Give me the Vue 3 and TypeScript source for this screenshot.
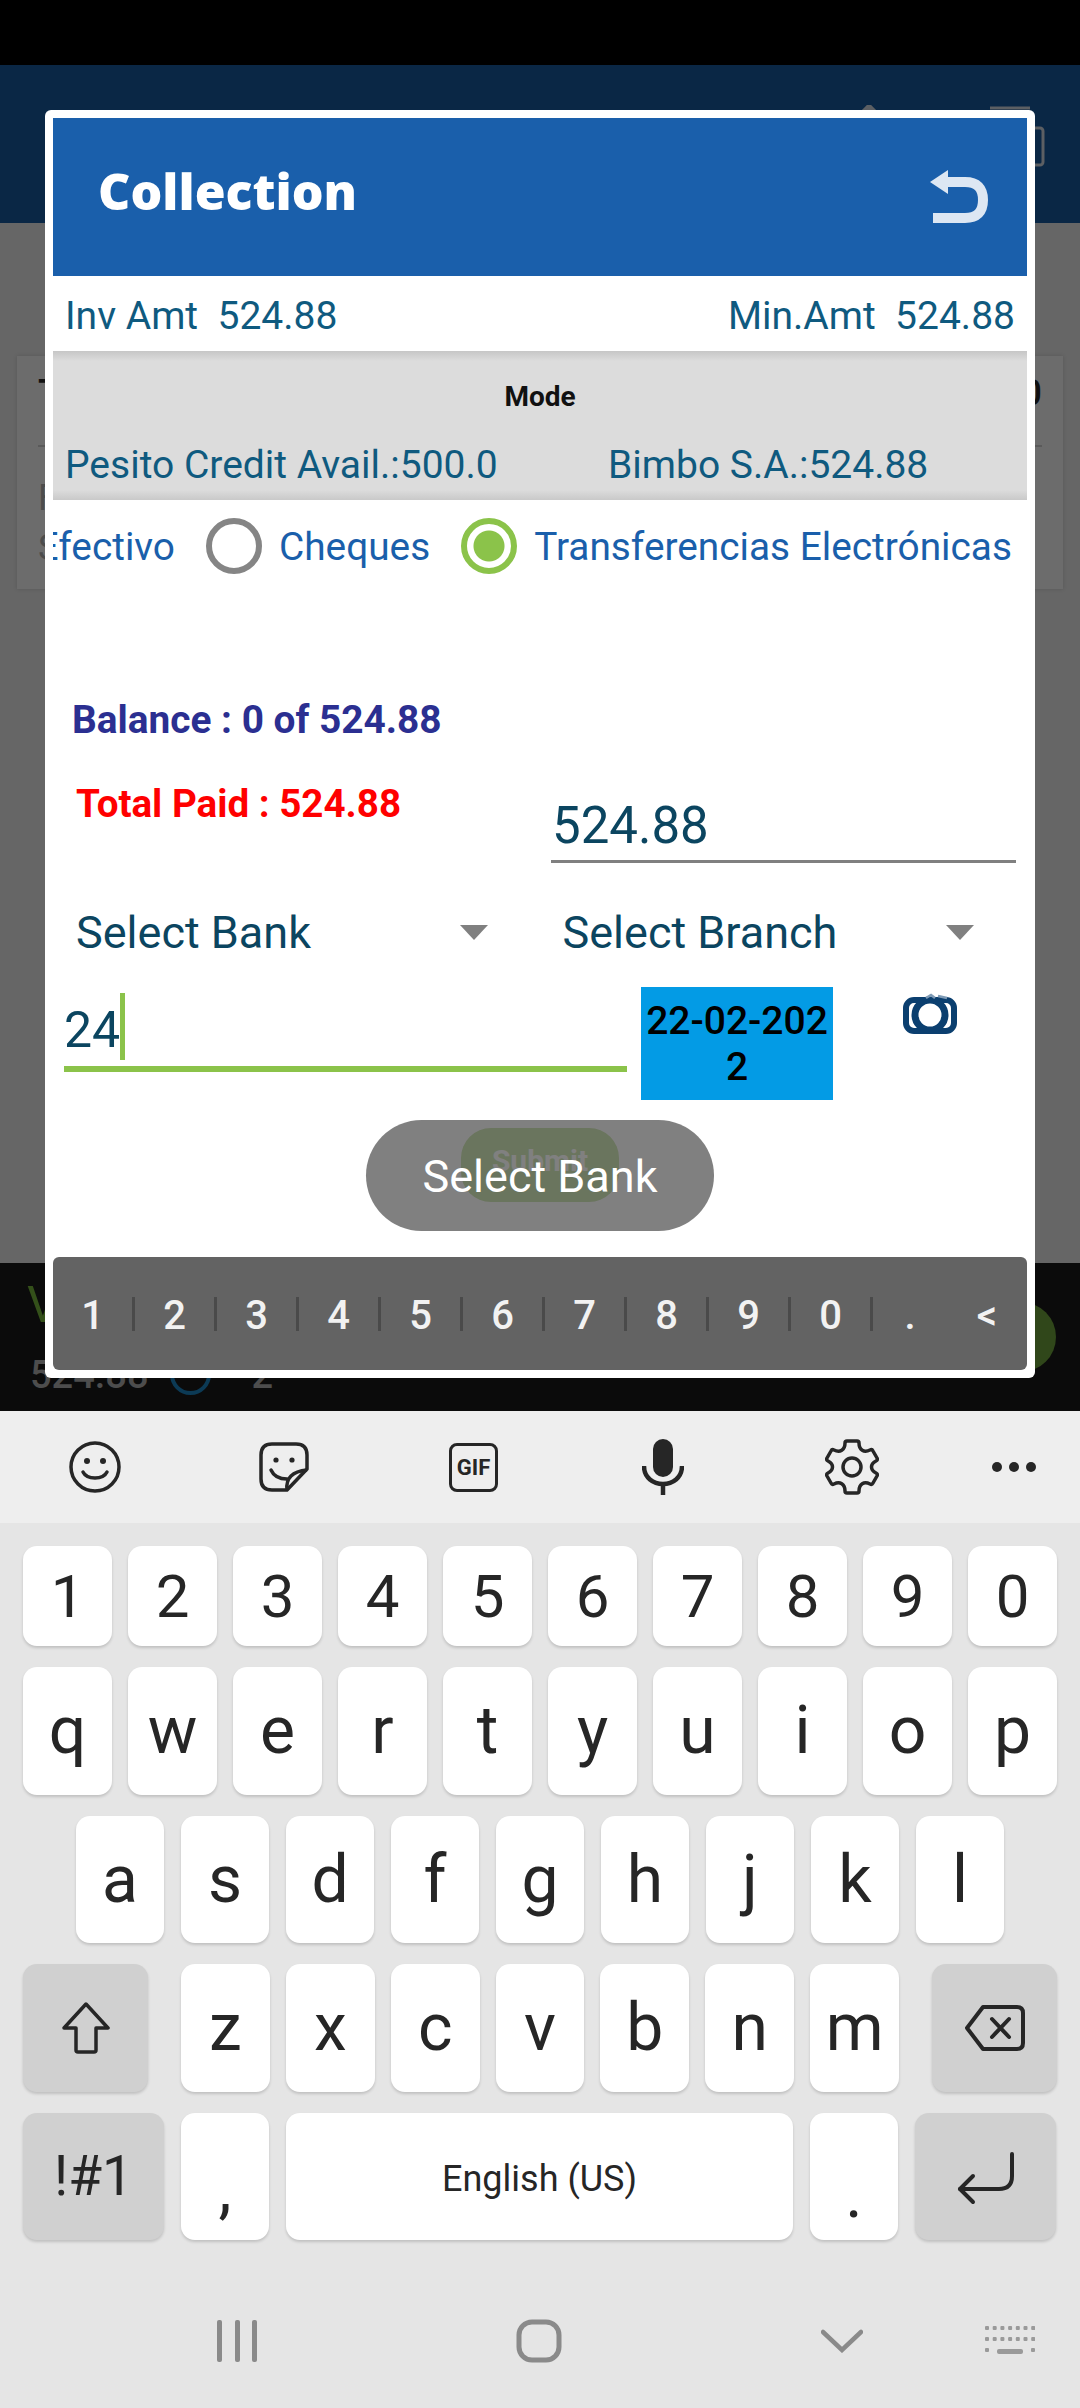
<script setup lang="ts">
const numberRow = ['1', '2', '3', '4', '5', '6', '7', '8', '9', '0'];
const topRow = ['q', 'w', 'e', 'r', 't', 'y', 'u', 'i', 'o', 'p'];
const homeRow = ['a', 's', 'd', 'f', 'g', 'h', 'j', 'k', 'l'];
const bottomRow = ['z', 'x', 'c', 'v', 'b', 'n', 'm'];
const keypad = ['1', '2', '3', '4', '5', '6', '7', '8', '9', '0', '.', '<'];
</script>

<template>
  <div class="page">
    <div class="status"></div>

    <div class="bg-header">
      <svg width="190" height="70" viewBox="0 0 190 70" fill="none" stroke="#5c5f63" stroke-width="3">
        <path d="M3 6 L9 0 L15 6" fill="#5c5f63" />
        <path d="M130 3 H170" />
        <rect x="120" y="23" width="63" height="37" rx="3" />
      </svg>
    </div>
    <div class="bg-body">
      <div class="bg-card">
        <div class="bg-card-top"><span>T</span><span>0</span></div>
        <div class="bg-card-line"></div>
        <div class="bg-card-text">F</div>
        <div class="bg-card-text">S</div>
      </div>
    </div>
    <div class="bg-bar">
      <div class="bg-bar-left">
        <div class="bg-v">V</div>
        <div class="bg-sum">
          <span>524.88</span>
          <span class="bg-info"></span>
          <span>2</span>
        </div>
      </div>
      <div class="bg-fab"></div>
    </div>

    <div class="keyboard">
      <div class="toolbar">
        <div class="tool">
          <svg width="52" height="52" viewBox="0 0 52 52" fill="none" stroke="#262626" stroke-width="3.5">
            <circle cx="26" cy="26" r="24" />
            <circle cx="18" cy="20" r="3" fill="#262626" stroke="none" />
            <circle cx="34" cy="20" r="3" fill="#262626" stroke="none" />
            <path d="M14 31 C18 39 34 39 38 31" stroke-linecap="round" />
          </svg>
        </div>
        <div class="tool">
          <svg width="52" height="52" viewBox="0 0 52 52" fill="none" stroke="#262626" stroke-width="3.5" stroke-linejoin="round">
            <path d="M14 3 H38 Q49 3 49 14 V28 L29 49 H14 Q3 49 3 38 V14 Q3 3 14 3 Z" />
            <path d="M29 49 Q27 31 49 29" />
            <path d="M29 38 Q17 38 13 29" stroke-linecap="round" />
            <circle cx="18" cy="19" r="2.6" fill="#262626" stroke="none" />
            <circle cx="34" cy="19" r="2.6" fill="#262626" stroke="none" />
          </svg>
        </div>
        <div class="tool">
          <div class="gif">GIF</div>
        </div>
        <div class="tool">
          <svg width="42" height="58" viewBox="0 0 42 58" fill="none" stroke="#262626" stroke-width="4.5">
            <rect x="11" y="1" width="20" height="38" rx="10" fill="#262626" stroke="none" />
            <path d="M2 28 C2 52 40 52 40 28" />
            <path d="M21 44 V57" />
          </svg>
        </div>
        <div class="tool">
          <svg width="54" height="56" viewBox="-27 -28 54 56" fill="none" stroke="#262626" stroke-width="3.5" stroke-linejoin="round">
            <path d="M-7 -24 Q-7 -26 -5 -26 H5 Q7 -26 7 -24 C7 -17 12 -14 18 -17 Q20 -18 21 -16 L25 -9 Q26 -7 24 -6 C18 -3 18 3 24 6 Q26 7 25 9 L21 16 Q20 18 18 17 C12 14 7 17 7 24 Q7 26 5 26 H-5 Q-7 26 -7 24 C-7 17 -12 14 -18 17 Q-20 18 -21 16 L-25 9 Q-26 7 -24 6 C-18 3 -18 -3 -24 -6 Q-26 -7 -25 -9 L-21 -16 Q-20 -18 -18 -17 C-12 -14 -7 -17 -7 -24 Z" />
            <circle r="9" />
          </svg>
        </div>
        <div class="tool tool-last">
          <span class="dot"></span><span class="dot"></span><span class="dot"></span>
        </div>
      </div>

      <div class="keys">
        <div class="row row-num">
          <div v-for="k in numberRow" :key="k" class="key">{{ k }}</div>
        </div>
        <div class="row">
          <div v-for="k in topRow" :key="k" class="key">{{ k }}</div>
        </div>
        <div class="row row-home">
          <div v-for="k in homeRow" :key="k" class="key">{{ k }}</div>
        </div>
        <div class="row row-shift">
          <div class="key key-fn key-shift">
            <svg width="50" height="54" viewBox="0 0 50 54" fill="none" stroke="#262626" stroke-width="3.5" stroke-linejoin="round">
              <path d="M25 3 L47 27 H35 V49 Q35 51 33 51 H17 Q15 51 15 49 V27 H3 Z" />
            </svg>
          </div>
          <div class="letters">
            <div v-for="k in bottomRow" :key="k" class="key">{{ k }}</div>
          </div>
          <div class="key key-fn key-back">
            <svg width="62" height="48" viewBox="0 0 60 48" fill="none" stroke="#262626" stroke-width="4" stroke-linejoin="round" stroke-linecap="round">
              <path d="M18 3 H52 Q58 3 58 9 V39 Q58 45 52 45 H18 L2 24 Z" />
              <path d="M27 15 L44 33 M44 15 L27 33" />
            </svg>
          </div>
        </div>
        <div class="row row-bottom">
          <div class="key key-fn key-sym">!#1</div>
          <div class="key key-comma">,</div>
          <div class="key key-space">English (US)</div>
          <div class="key key-dot">.</div>
          <div class="key key-fn key-enter">
            <svg width="58" height="54" viewBox="0 0 58 54" fill="none" stroke="#262626" stroke-width="4" stroke-linecap="round" stroke-linejoin="round">
              <path d="M55 2 V24 Q55 37 42 37 H3" />
              <path d="M16 24 L3 37 L16 50" />
            </svg>
          </div>
        </div>
      </div>

      <div class="nav">
        <svg class="nav-recent" width="40" height="42" viewBox="0 0 40 42" fill="#8a8a8a">
          <rect x="0" y="0" width="5" height="42" rx="2" />
          <rect x="18" y="0" width="5" height="42" rx="2" />
          <rect x="35" y="0" width="5" height="42" rx="2" />
        </svg>
        <svg class="nav-home" width="46" height="44" viewBox="0 0 46 44" fill="none" stroke="#8a8a8a" stroke-width="5">
          <rect x="3" y="3" width="40" height="38" rx="13" />
        </svg>
        <svg class="nav-back" width="42" height="24" viewBox="0 0 42 24" fill="none" stroke="#8a8a8a" stroke-width="4.5" stroke-linecap="round">
          <path d="M2 3 L21 21 L40 3" />
        </svg>
        <svg class="nav-kbd" width="50" height="30" viewBox="0 0 50 30" fill="#9a9a9a">
          <rect v-for="i in 7" :key="'a' + i" :x="(i - 1) * 7.7" y="0" width="4" height="4" rx="1" />
          <rect v-for="i in 7" :key="'b' + i" :x="(i - 1) * 7.7" y="11" width="4" height="4" rx="1" />
          <rect x="0" y="22" width="4" height="4" rx="1" />
          <rect x="46" y="22" width="4" height="4" rx="1" />
          <rect x="12" y="23" width="26" height="5" rx="2" />
        </svg>
      </div>
    </div>

    <div class="dialog">
      <div class="dlg-head">
        <span class="dlg-title">Collection</span>
        <svg width="60" height="54" viewBox="0 0 60 54" fill="none" stroke="#dde7f3" stroke-width="10">
          <path d="M15 12 H35 Q53 12 53 30 Q53 48 35 48 H3" />
          <path d="M0 12 L18 0 V24 Z" fill="#dde7f3" stroke="none" />
        </svg>
      </div>

      <div class="amounts">
        <span>Inv Amt &nbsp;524.88</span>
        <span>Min.Amt &nbsp;524.88</span>
      </div>

      <div class="mode">
        <div class="mode-title">Mode</div>
        <div class="mode-lines">
          <span class="mode-credit">Pesito Credit Avail.:500.0</span>
          <span>Bimbo S.A.:524.88</span>
        </div>
      </div>

      <div class="radios">
        <span class="radio-label">Efectivo</span>
        <span class="radio"></span>
        <span class="radio-label">Cheques</span>
        <span class="radio radio-on"></span>
        <span class="radio-label">Transferencias Electrónicas</span>
      </div>

      <div class="balance">Balance : 0 of 524.88</div>

      <div class="paid">
        <div class="paid-text">Total Paid : 524.88</div>
        <div class="paid-input">524.88</div>
      </div>

      <div class="selects">
        <div class="select"><span>Select Bank</span><i class="caret"></i></div>
        <div class="select"><span>Select Branch</span><i class="caret"></i></div>
      </div>

      <div class="cheque">
        <div class="cheque-input">24<i class="cursor"></i></div>
        <div class="date">22-02-2022</div>
        <svg class="camera" width="56" height="40" viewBox="0 0 56 40" fill="none" stroke="#0b3f6f" stroke-width="6">
          <rect x="4" y="5" width="48" height="31" rx="8" />
          <circle cx="28" cy="20" r="15" fill="#fff" stroke-width="7" />
          <path d="M24 3 L29 0 L33 3 M36 1 L45 3" stroke="#7f9bb6" stroke-width="2.5" />
        </svg>
      </div>

      <div class="submit">Submit</div>

      <div class="keypad">
        <template v-for="(k, i) in keypad" :key="k">
          <span class="pad-key">{{ k }}</span>
          <i v-if="i < 10" class="pad-sep"></i>
        </template>
      </div>

      <div class="toast">Select Bank</div>
    </div>
  </div>
</template>

<style scoped>
.page {
  position: relative;
  width: 1080px;
  height: 2408px;
  display: flex;
  flex-direction: column;
  overflow: hidden;
  font-family: Roboto, "Noto Sans", sans-serif;
  background: #e5e5e5;
}

.status {
  height: 65px;
  background: #000;
}

.bg-header {
  height: 158px;
  box-sizing: border-box;
  background: #0a2745;
  display: flex;
  justify-content: flex-end;
  padding: 40px 30px 0 0;
}

.bg-body {
  height: 1040px;
  background: #666;
  padding: 133px 17px 0;
  box-sizing: border-box;
}

.bg-card {
  height: 233px;
  box-sizing: border-box;
  background: #6c6c6c;
  box-shadow: 0 0 4px rgba(0, 0, 0, 0.15);
  padding: 16px 21px;
  color: #3a3a3a;
  font-size: 36px;
}

.bg-card-top {
  display: flex;
  justify-content: space-between;
  font-weight: 500;
  color: #111;
}

.bg-card-line {
  height: 2px;
  margin: 31px 0 26px;
  background: #5a5a5a;
}

.bg-card-text {
  height: 50px;
  line-height: 50px;
  color: #4c4c4c;
}

.bg-bar {
  height: 148px;
  background: #0b0b0b;
  display: flex;
  justify-content: space-between;
  padding: 0 24px 0 27px;
}

.bg-v {
  height: 50px;
  margin-top: 17px;
  line-height: 50px;
  font-size: 50px;
  color: #34501a;
}

.bg-sum {
  display: flex;
  align-items: center;
  gap: 21px;
  height: 41px;
  margin-top: 24px;
  padding-left: 3px;
  font-size: 38px;
  font-weight: 500;
  color: #4d4d4d;
}

.bg-info {
  width: 41px;
  height: 41px;
  box-sizing: border-box;
  border: 4px solid #0c3a55;
  border-radius: 50%;
  margin-right: 20px;
}

.bg-fab {
  width: 70px;
  height: 70px;
  margin-top: 39px;
  border-radius: 50%;
  background: #30471a;
}

.keyboard {
  height: 997px;
  display: flex;
  flex-direction: column;
  background: #e5e5e5;
}

.toolbar {
  height: 112px;
  flex: none;
  display: flex;
  background: #eeeeee;
}

.tool {
  width: 189.5px;
  display: flex;
  align-items: center;
  justify-content: center;
}

.tool-last {
  width: 133px;
  gap: 7px;
}

.dot {
  width: 10px;
  height: 10px;
  border-radius: 50%;
  background: #262626;
}

.gif {
  width: 49px;
  height: 49px;
  box-sizing: border-box;
  border: 3.5px solid #262626;
  border-radius: 8px;
  display: flex;
  align-items: center;
  justify-content: center;
  font-size: 22px;
  font-weight: 700;
  color: #262626;
}

.keys {
  display: flex;
  flex-direction: column;
  gap: 21px;
  padding: 23px 23px 0;
}

.row {
  height: 127.5px;
  display: flex;
  gap: 16px;
}

.row-num {
  height: 100px;
}

.row-home {
  gap: 17px;
  padding: 0 53px;
}

.row-shift {
  gap: 33px;
}

.row-bottom {
  gap: 17px;
}

.letters {
  flex: 1;
  display: flex;
  gap: 16px;
}

.key {
  flex: 1;
  min-width: 0;
  display: flex;
  align-items: center;
  justify-content: center;
  border-radius: 14px;
  background: #fff;
  box-shadow: 0 2px 3px rgba(0, 0, 0, 0.16);
  color: #262626;
  font-size: 66px;
}

.row-num .key {
  font-size: 60px;
}

.key-fn {
  background: #d0d0d0;
}

.key-shift,
.key-back {
  flex: 0 0 125px;
}

.key-sym,
.key-enter {
  flex: 0 0 141px;
}

.key-sym {
  font-size: 55px;
}

.key-enter svg {
  margin-top: 5px;
}

.key-comma,
.key-dot {
  flex: 0 0 88px;
  padding-top: 36px;
  box-sizing: border-box;
}

.key-comma {
  padding-top: 24px;
}

.key-space {
  flex: 0 0 507px;
  padding-top: 5px;
  box-sizing: border-box;
  font-size: 36px;
}

.nav {
  position: relative;
  flex: 1;
}

.nav svg {
  position: absolute;
}

.nav-recent {
  left: 217px;
  top: 80px;
}

.nav-home {
  left: 516px;
  top: 79px;
}

.nav-back {
  left: 821px;
  top: 89px;
}

.nav-kbd {
  left: 985px;
  top: 86px;
}

/* dialog sits over the page */
.dialog {
  position: absolute;
  left: 45px;
  top: 110px;
  width: 990px;
  height: 1268px;
  box-sizing: border-box;
  padding: 8px;
  border-radius: 6px;
  background: #fff;
  display: flex;
  flex-direction: column;
}

.dlg-head {
  height: 158px;
  flex: none;
  display: flex;
  align-items: center;
  justify-content: space-between;
  padding: 0 37px 0 45px;
  background: #1a5fab;
}

.dlg-title {
  margin-top: -12px;
  font-family: "Open Sans", sans-serif;
  font-size: 50px;
  font-weight: 800;
  color: #fff;
}

.amounts {
  height: 75px;
  flex: none;
  box-sizing: border-box;
  padding: 4px 12px 0;
  display: flex;
  align-items: center;
  justify-content: space-between;
  font-size: 39px;
  color: #0f5a7f;
}

.mode {
  height: 149px;
  flex: none;
  box-sizing: border-box;
  padding: 28px 12px 0;
  background: linear-gradient(#c6c6c6, #dcdcdc 10px, #dcdcdc 139px, #c9c9c9);
  color: #0f5a7f;
  font-size: 39px;
}

.mode-title {
  height: 36px;
  line-height: 36px;
  text-align: center;
  font-size: 28px;
  font-weight: 700;
  color: #111;
}

.mode-lines {
  display: flex;
  margin-top: 27px;
}

.mode-credit {
  width: 543px;
}

.radios {
  height: 90px;
  flex: none;
  box-sizing: border-box;
  padding: 2px 15px 0 0;
  overflow: hidden;
  display: flex;
  align-items: center;
  justify-content: flex-end;
}

.radio-label {
  flex: none;
  margin: 0 31px 0 17px;
  font-size: 38.8px;
  color: #1a5fab;
}

.radio-label:last-child {
  margin-right: 0;
}

.radio {
  flex: none;
  width: 56px;
  height: 56px;
  box-sizing: border-box;
  border: 6px solid #858585;
  border-radius: 50%;
}

.radio-on {
  border-color: #8bc34a;
  background: radial-gradient(circle, #8bc34a 0 15px, #fff 16px);
}

.balance {
  flex: none;
  margin: 100px 0 0 19px;
  height: 60px;
  line-height: 60px;
  font-size: 38.8px;
  font-weight: 700;
  color: #2b2f91;
}

.paid {
  height: 113px;
  flex: none;
  display: flex;
  justify-content: space-between;
  padding: 0 11px 0 23px;
}

.paid-text {
  margin-top: 24px;
  height: 60px;
  line-height: 60px;
  font-size: 38.6px;
  font-weight: 700;
  color: #f00;
}

.paid-input {
  width: 465px;
  height: 113px;
  box-sizing: border-box;
  padding: 47px 0 0 1px;
  line-height: 58px;
  border-bottom: 3px solid #808080;
  font-size: 51px;
  color: #0b4560;
}

.selects {
  flex: none;
  height: 70px;
  margin-top: 34px;
  display: flex;
  gap: 75px;
  padding: 0 53px 0 23px;
}

.select {
  flex: 1;
  display: flex;
  align-items: center;
  justify-content: space-between;
  font-size: 45px;
  color: #0b4560;
}

.caret {
  width: 0;
  height: 0;
  border-left: 14.5px solid transparent;
  border-right: 14.5px solid transparent;
  border-top: 15px solid #808080;
}

.cheque {
  flex: none;
  height: 113px;
  margin-top: 20px;
  display: flex;
  padding-left: 11px;
}

.cheque-input {
  width: 563px;
  height: 85px;
  box-sizing: border-box;
  padding-top: 10px;
  line-height: 66px;
  border-bottom: 6px solid #8bc34a;
  font-size: 50px;
  color: #0b4560;
}

.cursor {
  display: inline-block;
  width: 5px;
  height: 67px;
  margin-top: -4px;
  vertical-align: top;
  background: #8bc34a;
}

.date {
  width: 192px;
  height: 113px;
  margin-left: 14px;
  background: #039be5;
  color: #000;
  font-size: 39px;
  font-weight: 500;
  line-height: 46px;
  padding-top: 11px;
  box-sizing: border-box;
  text-align: center;
  word-break: break-all;
}

.camera {
  margin: 8px 0 0 69px;
  overflow: visible;
}

.submit {
  flex: none;
  align-self: center;
  width: 158px;
  height: 74px;
  margin-top: 28px;
  border-radius: 30px;
  background: #8bc34a;
  line-height: 66px;
  text-align: center;
  font-size: 30px;
  font-weight: 700;
  color: #fff;
}

.keypad {
  margin-top: auto;
  height: 113px;
  flex: none;
  display: flex;
  align-items: center;
  border-radius: 6px;
  background: #636363;
}

.pad-key {
  flex: 0 0 79px;
  padding-top: 4px;
  text-align: center;
  font-size: 40px;
  font-weight: 500;
  color: #f2f2f2;
}

.pad-key:nth-last-child(2) {
  flex-basis: 74px;
}

.pad-key:last-child {
  flex-basis: 80px;
}

.pad-sep {
  flex: none;
  width: 3px;
  height: 34px;
  background: #4a4a4a;
}

.toast {
  position: absolute;
  left: 321px;
  top: 1010px;
  width: 348px;
  height: 111px;
  border-radius: 56px;
  background: rgba(99, 99, 99, 0.81);
  color: #fff;
  font-size: 45px;
  line-height: 114px;
  text-align: center;
}
</style>
